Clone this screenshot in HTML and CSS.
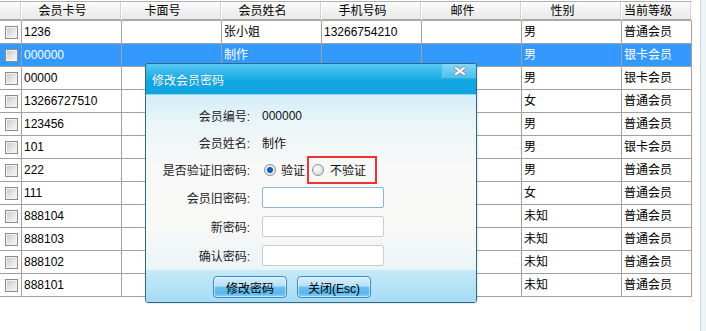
FILE: index.html
```html
<!DOCTYPE html>
<html>
<head>
<meta charset="utf-8">
<link rel="stylesheet" href="styles.css">
</head>
<body>
<div class="page">
  <div class="table">
    <div class="row hdr">
      <div class="c"></div>
      <div class="c">会员卡号</div>
      <div class="c">卡面号</div>
      <div class="c">会员姓名</div>
      <div class="c">手机号码</div>
      <div class="c">邮件</div>
      <div class="c">性别</div>
      <div class="c last">当前等级</div>
    </div>
    <div class="row"><div class="c"><span class="cb"></span></div><div class="c">1236</div><div class="c"></div><div class="c">张小姐</div><div class="c">13266754210</div><div class="c"></div><div class="c">男</div><div class="c">普通会员</div></div>
    <div class="row sel"><div class="c"><span class="cb"></span></div><div class="c">000000</div><div class="c"></div><div class="c">制作</div><div class="c"></div><div class="c"></div><div class="c">男</div><div class="c">银卡会员</div></div>
    <div class="row"><div class="c"><span class="cb"></span></div><div class="c">00000</div><div class="c"></div><div class="c"></div><div class="c"></div><div class="c"></div><div class="c">男</div><div class="c">银卡会员</div></div>
    <div class="row"><div class="c"><span class="cb"></span></div><div class="c">13266727510</div><div class="c"></div><div class="c"></div><div class="c"></div><div class="c"></div><div class="c">女</div><div class="c">普通会员</div></div>
    <div class="row"><div class="c"><span class="cb"></span></div><div class="c">123456</div><div class="c"></div><div class="c"></div><div class="c"></div><div class="c"></div><div class="c">男</div><div class="c">普通会员</div></div>
    <div class="row"><div class="c"><span class="cb"></span></div><div class="c">101</div><div class="c"></div><div class="c"></div><div class="c"></div><div class="c"></div><div class="c">男</div><div class="c">银卡会员</div></div>
    <div class="row"><div class="c"><span class="cb"></span></div><div class="c">222</div><div class="c"></div><div class="c"></div><div class="c"></div><div class="c"></div><div class="c">男</div><div class="c">普通会员</div></div>
    <div class="row"><div class="c"><span class="cb"></span></div><div class="c">111</div><div class="c"></div><div class="c"></div><div class="c"></div><div class="c"></div><div class="c">女</div><div class="c">普通会员</div></div>
    <div class="row"><div class="c"><span class="cb"></span></div><div class="c">888104</div><div class="c"></div><div class="c"></div><div class="c"></div><div class="c"></div><div class="c">未知</div><div class="c">普通会员</div></div>
    <div class="row"><div class="c"><span class="cb"></span></div><div class="c">888103</div><div class="c"></div><div class="c"></div><div class="c"></div><div class="c"></div><div class="c">未知</div><div class="c">普通会员</div></div>
    <div class="row"><div class="c"><span class="cb"></span></div><div class="c">888102</div><div class="c"></div><div class="c"></div><div class="c"></div><div class="c"></div><div class="c">未知</div><div class="c">普通会员</div></div>
    <div class="row"><div class="c"><span class="cb"></span></div><div class="c">888101</div><div class="c"></div><div class="c"></div><div class="c"></div><div class="c"></div><div class="c">未知</div><div class="c">普通会员</div></div>
  </div>
  <div class="strip"></div>
</div>

<div class="dialog">
  <div class="titlebar">
    <span class="title">修改会员密码</span>
    <span class="close">
      <svg width="12" height="10" viewBox="0 0 12 10">
        <path d="M2 2 L10 8 M10 2 L2 8" stroke="#84939e" stroke-width="3.6" stroke-linecap="square"/>
        <path d="M2 2 L10 8 M10 2 L2 8" stroke="#ffffff" stroke-width="2" stroke-linecap="square"/>
      </svg>
    </span>
  </div>
  <div class="body">
    <div class="frow info"><span class="lbl">会员编号:</span><span class="val">000000</span></div>
    <div class="frow info"><span class="lbl">会员姓名:</span><span class="val">制作</span></div>
    <div class="frow info"><span class="lbl">是否验证旧密码:</span>
      <span class="val radios">
        <span class="radio on"></span><span class="rtxt">验证</span>
        <span class="hl"><span class="radio"></span><span class="rtxt">不验证</span></span>
      </span>
    </div>
    <div class="frow inp"><span class="lbl">会员旧密码:</span><span class="box focus"></span></div>
    <div class="frow inp"><span class="lbl">新密码:</span><span class="box"></span></div>
    <div class="frow inp"><span class="lbl">确认密码:</span><span class="box"></span></div>
  </div>
  <div class="footer">
    <span class="btn">修改密码</span>
    <span class="btn">关闭(Esc)</span>
  </div>
</div>
</body>
</html>
```
FILE: styles.css
```css
html, body {
  margin: 0;
  padding: 0;
  background: #ffffff;
}
body {
  width: 706px;
  height: 331px;
  overflow: hidden;
  position: relative;
  font-family: "Liberation Sans", "Noto Sans CJK SC", sans-serif;
  font-size: 12px;
  color: #000;
}
.page {
  display: flex;
  height: 331px;
}
.table {
  width: 692px;
}
.row {
  display: grid;
  grid-template-columns: 22px 100px 100px 100px 100px 100px 100px 70px;
  height: 23px;
}
.c {
  box-sizing: border-box;
  border-right: 1px solid #a0a0a0;
  border-bottom: 1px solid #a0a0a0;
  padding-left: 2px;
  line-height: 22px;
  white-space: nowrap;
  overflow: hidden;
  display: flex;
  align-items: center;
}
.hdr {
  height: 21px;
  background: linear-gradient(#ffffff, #f4f4f4 40%, #e6e6e6);
  box-shadow: inset 0 1px 0 #ffffff;
}
.hdr .c {
  border-top: 1px solid #b0b0b0;
  margin-top: 1px;
  border-right: 1px solid #ffffff;
  box-shadow: inset -1px 0 0 #d4d4d4;
  border-bottom: 2px solid #a8a8a8;
  justify-content: center;
  padding: 0 18px 0 0;
  line-height: 16px;
  height: 20px;
}
.hdr .c.last {
  justify-content: flex-start;
  padding-left: 2px;
}
.sel {
  background: #3399ff;
  color: #ffffff;
}
.cb {
  box-sizing: border-box;
  display: block;
  width: 13px;
  height: 13px;
  margin-left: 3px;
  border: 1px solid #8c8c8c;
  background: linear-gradient(135deg, #c4c4c4, #e8e8e8 60%, #f8f8f8);
  box-shadow: inset 0 0 0 1px #f2f2f2;
}
.strip {
  flex: 1;
  background: linear-gradient(90deg, #ffffff 0, #ffffff 8px, #c6d8e2 8px, #c6d8e2 9px, #eef4f6 9px);
}

/* dialog */
.dialog {
  position: absolute;
  left: 145px;
  top: 63px;
  width: 332px;
  height: 240px;
  box-sizing: border-box;
  border: 1px solid #2a6b88;
  border-radius: 3px;
  overflow: hidden;
  display: flex;
  flex-direction: column;
  box-shadow: 1px 1px 0 rgba(0,0,0,0.08);
}
.titlebar {
  height: 30px;
  flex: none;
  position: relative;
  background: linear-gradient(#5cc8f2 0, #2ab4ea 35%, #12a6e2 60%, #10a4e0 100%);
  border-bottom: 1px solid #8fd6f2;
  display: flex;
  align-items: center;
}
.title {
  color: #ffffff;
  padding-left: 6px;
  font-size: 12px;
  text-shadow: 0 0 1px rgba(0,60,100,0.4);
}
.close {
  position: absolute;
  right: 0;
  top: 0;
  width: 34px;
  height: 14px;
  box-sizing: border-box;
  border-left: 1px solid #7ccbea;
  border-bottom: 1px solid #5cbfe8;
  background: linear-gradient(#86d8f6, #4ec0ee);
  display: flex;
  align-items: center;
  justify-content: center;
}
.body {
  flex: none;
  height: 175px;
  box-sizing: border-box;
  padding-top: 7px;
  background: linear-gradient(#d6eef8 0, #eef6f8 20%, #f7f8f7 40%, #f8f8f7 75%, #eaf4f7 100%);
}
.frow {
  display: flex;
  align-items: center;
}
.frow.info { height: 27px; }
.frow.inp { height: 29px; }
.lbl {
  width: 104px;
  text-align: right;
  color: #222;
  flex: none;
  white-space: nowrap;
}
.val {
  margin-left: 12px;
  color: #111;
}
.radios {
  display: flex;
  align-items: center;
  margin-left: 14px;
}
.radio {
  box-sizing: border-box;
  display: block;
  width: 12px;
  height: 12px;
  border-radius: 50%;
  border: 1px solid #8a949c;
  background: radial-gradient(circle at 40% 35%, #ffffff, #dcdcdc 70%, #c8c8c8);
  flex: none;
}
.radio.on {
  background: radial-gradient(circle, #1a6fc0 0, #0c58a8 2.5px, #e8eef2 3.5px, #d0d6da 100%);
}
.rtxt {
  margin-left: 5px;
}
.hl {
  display: flex;
  align-items: center;
  box-sizing: border-box;
  height: 28px;
  width: 70px;
  margin-left: 2px;
  padding-left: 3px;
  border: 2px solid #ec3434;
}
.hl .rtxt {
  margin-left: 6px;
}
.box {
  box-sizing: border-box;
  display: block;
  width: 122px;
  height: 21px;
  margin-left: 12px;
  background: #ffffff;
  border: 1px solid #c6ccd2;
  border-radius: 2px;
}
.box.focus {
  border-color: #8eb6d2;
}
.footer {
  flex: 1;
  background: linear-gradient(#c6eaf8, #a6dbf4);
  display: flex;
  gap: 10px;
  padding: 6px 0 0 67px;
  box-sizing: border-box;
}
.btn {
  box-sizing: border-box;
  width: 74px;
  height: 22px;
  border: 1px solid #3a8cc8;
  border-radius: 4px;
  background: linear-gradient(#d8f0fc 0, #b4e0f8 45%, #6cc0ee 52%, #58b6ec 80%, #8ed0f4 100%);
  box-shadow: inset 0 0 0 1px rgba(255,255,255,0.5);
  display: flex;
  align-items: center;
  justify-content: center;
  font-size: 12px;
  color: #000;
}
```
